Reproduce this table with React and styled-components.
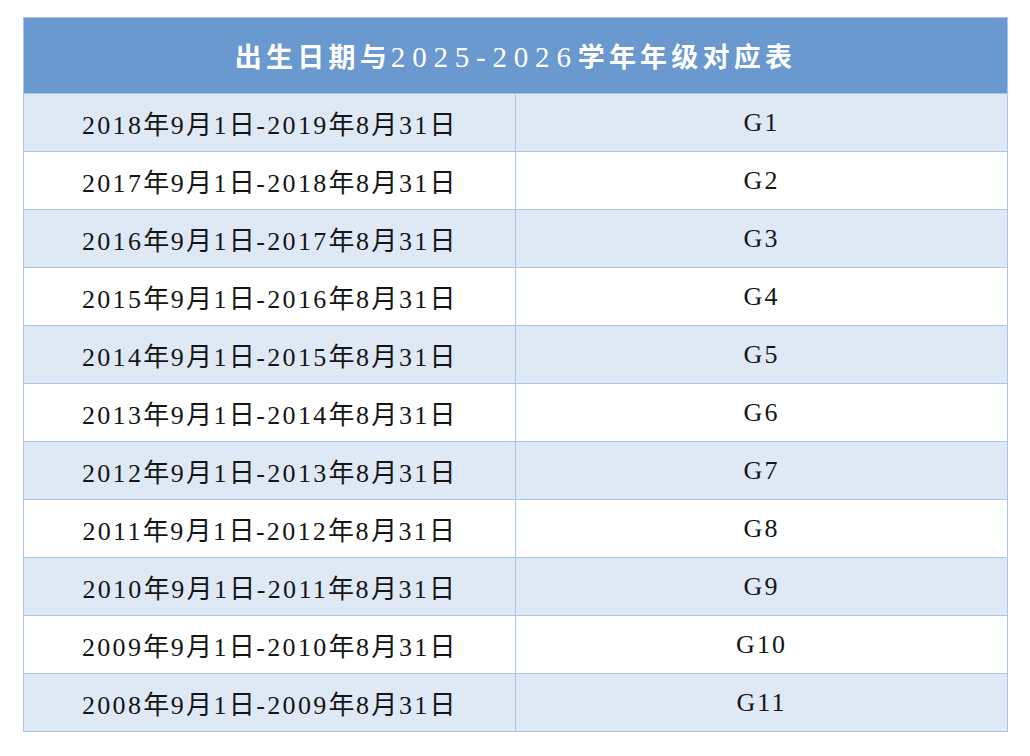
import React from "react";
import styled, { createGlobalStyle } from "styled-components";

const GlobalStyle = createGlobalStyle`
  body {
    margin: 0;
    background: #ffffff;
  }
`;

const Page = styled.div`
  padding: 17px 22px 24px 23px;
  font-family: "Liberation Serif", "Noto Sans CJK SC", serif;
`;

const Table = styled.table`
  width: 985px;
  border-collapse: collapse;
  table-layout: fixed;
`;

const Head = styled.th`
  height: 75px;
  padding: 0;
  background: #6999cf;
  color: #ffffff;
  font-size: 27px;
  font-weight: 700;
  letter-spacing: 4.2px;
  text-align: center;
  border: 1px solid #a9c5e8;
`;

const Cell = styled.td`
  height: 57px;
  padding: 0;
  background: ${(p) => (p.$stripe ? "#dfe8f5" : "#ffffff")};
  color: #151515;
  font-size: 26px;
  letter-spacing: 1.5px;
  text-align: center;
  border: 1px solid #a9c5e8;
`;

const Latin = styled.span`
  font-weight: 400;
  font-size: ${(p) => p.$size || "inherit"};
  letter-spacing: ${(p) => p.$spacing || "inherit"};
`;

// split a string into latin runs and CJK runs so digits can get their own spacing
const Mixed = ({ text, spacing, size }) => (
  <>
    {text.split(/([\x00-\x7F]+)/).map((part, i) =>
      i % 2 ? (
        <Latin key={i} $spacing={spacing} $size={size}>
          {part}
        </Latin>
      ) : (
        part
      )
    )}
  </>
);

const rows = [
  ["2018年9月1日-2019年8月31日", "G1"],
  ["2017年9月1日-2018年8月31日", "G2"],
  ["2016年9月1日-2017年8月31日", "G3"],
  ["2015年9月1日-2016年8月31日", "G4"],
  ["2014年9月1日-2015年8月31日", "G5"],
  ["2013年9月1日-2014年8月31日", "G6"],
  ["2012年9月1日-2013年8月31日", "G7"],
  ["2011年9月1日-2012年8月31日", "G8"],
  ["2010年9月1日-2011年8月31日", "G9"],
  ["2009年9月1日-2010年8月31日", "G10"],
  ["2008年9月1日-2009年8月31日", "G11"],
];

export default function App() {
  return (
    <Page>
      <GlobalStyle />
      <Table>
        <thead>
          <tr>
            <Head colSpan={2}>
              <Mixed
                text="出生日期与2025-2026学年年级对应表"
                spacing="6.8px"
                size="29px"
              />
            </Head>
          </tr>
        </thead>
        <tbody>
          {rows.map(([range, grade], i) => (
            <tr key={grade}>
              <Cell $stripe={i % 2 === 0}>
                <Mixed text={range} spacing="2.3px" />
              </Cell>
              <Cell $stripe={i % 2 === 0}>
                <Mixed text={grade} spacing="2px" />
              </Cell>
            </tr>
          ))}
        </tbody>
      </Table>
    </Page>
  );
}
